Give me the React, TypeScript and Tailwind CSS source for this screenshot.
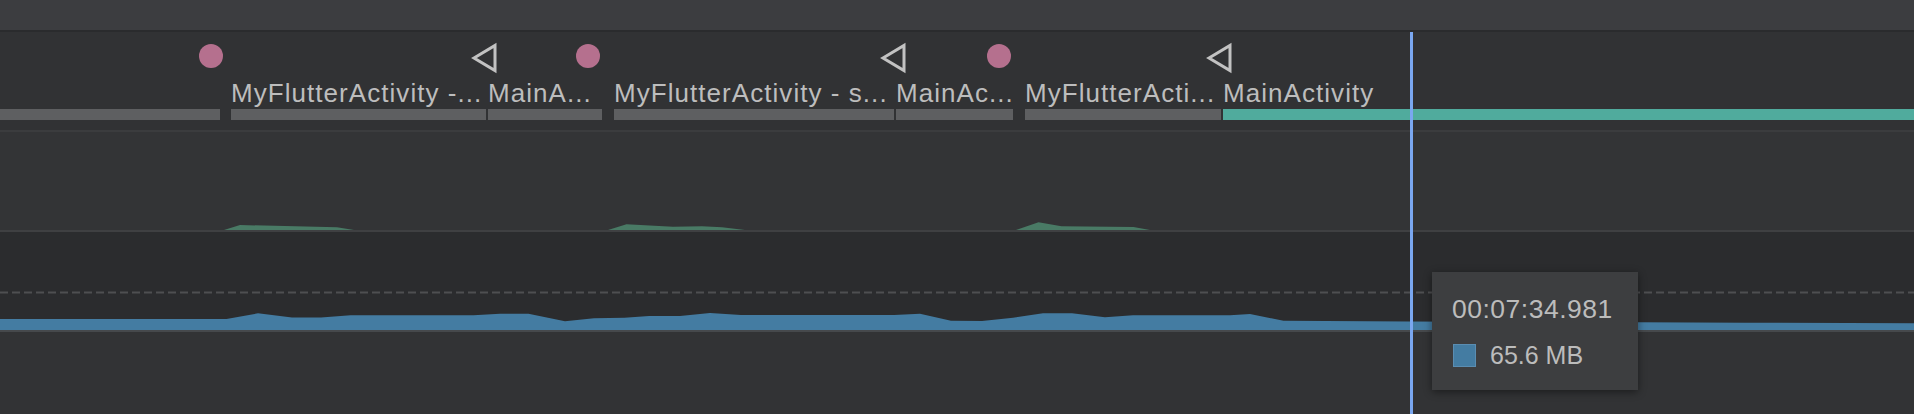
type Segment = {
  label: string
  width?: number
  gap: number
  active?: boolean
}

const segments: Segment[] = [
  { label: '', width: 220, gap: 0 },
  { label: 'MyFlutterActivity -...', width: 255, gap: 11 },
  { label: 'MainA...', width: 114, gap: 2 },
  { label: 'MyFlutterActivity - s...', width: 280, gap: 12 },
  { label: 'MainAc...', width: 117, gap: 2 },
  { label: 'MyFlutterActi...', width: 196, gap: 12 },
  { label: 'MainActivity', gap: 2, active: true },
]

const circles = [199, 576, 987]
const triangles = [471, 880, 1206]

const greenAreas = [
  '224,98 240,93 337,95.3 354,98',
  '608,98 626.5,92.3 673,94.7 702,94.3 722,95.3 745,98',
  '1016,98 1038.5,90.3 1061.5,94.3 1133.5,95 1150,98',
]

const memoryPoints = [
  [0, 87], [226.5, 87], [258, 81.3], [292, 85.5], [321, 85.5], [350.5, 83.2],
  [473.5, 83.2], [500, 81.8], [528.5, 81.8], [565, 89.3], [594, 86.3],
  [624.5, 85.7], [649, 84], [680, 84], [710, 81], [741, 83], [894, 83],
  [920, 81.7], [951, 88.7], [982, 89], [1013, 85.7], [1043, 81.3], [1072, 81.3],
  [1105, 85.3], [1133, 83.3], [1230, 83.3], [1250, 82], [1283.5, 88.7],
  [1409.5, 89.5], [1638, 90.3], [1746, 90.7], [1914, 91.3],
]

function Triangle({ left }: { left: number }) {
  return (
    <svg
      className="absolute top-[11px] overflow-visible"
      style={{ left }}
      width="26"
      height="30"
      viewBox="0 0 26 30"
    >
      <polygon points="3,15 24,2.5 24,27.5" fill="none" stroke="#c2c2c2" strokeWidth="3" />
    </svg>
  )
}

function LifecycleTrack() {
  return (
    <section className="relative flex h-[98px] bg-[#313234] pt-[47px]">
      {circles.map((left) => (
        <span
          key={left}
          className="absolute top-[12px] h-[24px] w-[24px] rounded-full bg-[#b5708e]"
          style={{ left }}
        />
      ))}
      {triangles.map((left) => (
        <Triangle key={left} left={left} />
      ))}
      {segments.map((s, i) => (
        <div
          key={i}
          className={`flex flex-col ${s.width ? 'shrink-0' : 'flex-1'}`}
          style={{ width: s.width, marginLeft: s.gap }}
        >
          <div className="h-[28px] overflow-hidden whitespace-nowrap text-[26px] leading-[28px] tracking-[1.05px] text-[#bdbdbd]">
            {s.label}
          </div>
          <div className={`mt-[2px] h-[11px] ${s.active ? 'bg-[#50ab9d]' : 'bg-[#5e5f61]'}`} />
        </div>
      ))}
    </section>
  )
}

function EventChart() {
  return (
    <div className="h-[98px] bg-[#333436]">
      <svg width="1914" height="98" viewBox="0 0 1914 98" className="block">
        {greenAreas.map((p) => (
          <polygon key={p} points={p} fill="#497a65" />
        ))}
      </svg>
    </div>
  )
}

function MemoryChart() {
  const pts = [...memoryPoints, [1914, 98], [0, 98]].map((p) => p.join(',')).join(' ')
  return (
    <div className="h-[98px] bg-[#2b2c2e]">
      <svg width="1914" height="98" viewBox="0 0 1914 98" className="block">
        <line x1="0" y1="60.5" x2="1914" y2="60.5" stroke="#4e4f51" strokeWidth="2" strokeDasharray="8 4" />
        <polygon points={pts} fill="#447ca2" />
      </svg>
    </div>
  )
}

export default function App() {
  return (
    <div className="relative h-[414px] w-[1914px] overflow-hidden bg-[#323335] font-['Liberation_Sans',Arial,sans-serif]">
      <div className="h-[30px] bg-[#3c3d40]" />
      <div className="h-[2px] bg-[#2a2b2d]" />
      <LifecycleTrack />
      <div className="h-[2px] bg-[#3b3c3e]" />
      <EventChart />
      <div className="h-[2px] bg-[#3f4042]" />
      <MemoryChart />
      <div className="h-[2px] bg-[#46494c]" />

      <div className="absolute bottom-0 left-[1410px] top-[32px] w-[3px] bg-[#7aa7f0]" />

      <div className="absolute left-[1432px] top-[272px] h-[118px] w-[206px] bg-[#3d3e40] pl-[20px] pt-[23px] leading-[28px] text-[#bcbcbc] shadow-[0_2px_8px_rgba(0,0,0,0.45)]">
        <div className="text-[26.5px] tracking-[0.5px]">00:07:34.981</div>
        <div className="mt-[18px] flex items-center gap-[14px] text-[25px]">
          <span className="ml-[1px] h-[23px] w-[23px] border border-[#5a8db2] bg-[#447ca2]" />
          <span>65.6 MB</span>
        </div>
      </div>
    </div>
  )
}
